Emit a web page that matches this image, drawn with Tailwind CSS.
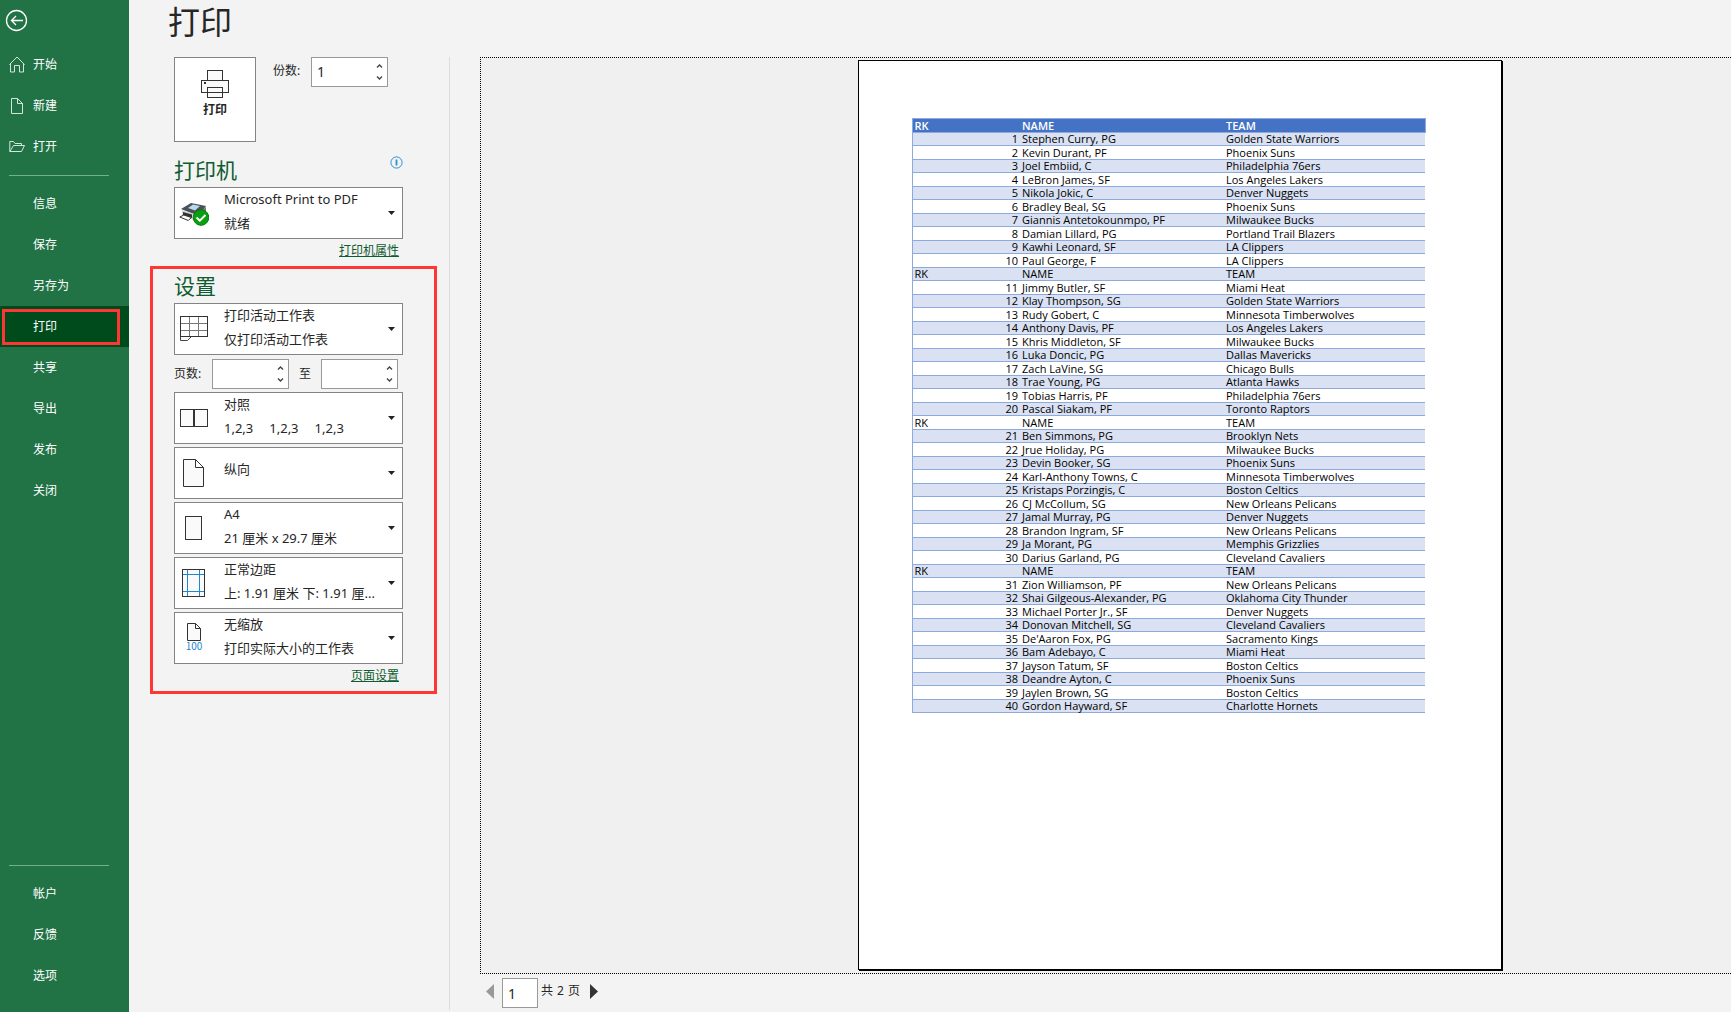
<!DOCTYPE html>
<html lang="zh-CN">
<head>
<meta charset="utf-8">
<title>打印</title>
<script src="https://cdn.jsdelivr.net/npm/@tailwindcss/browser@4"></script>
</head>
<body class="bg-[#f3f3f3] text-[#262626] font-['Noto_Sans','Noto_Sans_CJK_SC',sans-serif]">
<div class="flex min-h-screen overflow-hidden">

  <nav class="flex w-[129px] shrink-0 flex-col bg-[#217346] pb-4 text-xs text-white" aria-label="文件">
    <button type="button" aria-label="返回" class="flex h-11 items-start pt-[9px] pl-[5px]">
      <svg width="23" height="23" viewBox="0 0 23 23" fill="none" stroke="#fff" stroke-width="1.3"><circle cx="11.5" cy="11.5" r="10"/><path d="M18 11.5H6.5M11 7l-4.5 4.5L11 16"/></svg>
    </button>
    <a href="#" class="flex h-[41px] items-center gap-2 pl-[9px]">
      <svg width="16" height="18" viewBox="0 0 16 18" fill="none" stroke="#d4e6dc" stroke-width="1"><path d="M.4 8.600 8 1l7.600 7.600M1.500 7.500v8.500h4v-6.500h5V16h4V7.500"/></svg>
      <span>开始</span></a>
    <a href="#" class="flex h-[41px] items-center gap-2 pl-[9px]">
      <svg width="16" height="18" viewBox="0 0 16 18" fill="none" stroke="#d4e6dc" stroke-width="1"><path d="M2.500 1.500h6l5 5v10h-11zM8.500 1.500v5h5"/></svg>
      <span>新建</span></a>
    <a href="#" class="flex h-[41px] items-center gap-2 pl-[9px]">
      <svg width="16" height="18" viewBox="0 0 16 18" fill="none" stroke="#d4e6dc" stroke-width="1"><path d="M.8 13.500v-10h3.700l1.500 2h6.500v2M.8 13.500h11.700l3-6H4.500z"/></svg>
      <span>打开</span></a>
    <hr class="mt-2 mb-[7px] ml-[9px] w-[100px] border-[#6fb18c]">
    <a href="#" class="flex h-[41px] items-center pl-[33px]">信息</a>
    <a href="#" class="flex h-[41px] items-center pl-[33px]">保存</a>
    <a href="#" class="flex h-[41px] items-center pl-[33px]">另存为</a>
    <a href="#" aria-current="page" class="relative flex h-[41px] items-center bg-[#004b1c] pl-[33px]">打印
      <span class="absolute top-[3px] left-[2px] h-9 w-[118px] border-3 border-[#ff3636]"></span></a>
    <a href="#" class="flex h-[41px] items-center pl-[33px]">共享</a>
    <a href="#" class="flex h-[41px] items-center pl-[33px]">导出</a>
    <a href="#" class="flex h-[41px] items-center pl-[33px]">发布</a>
    <a href="#" class="flex h-[41px] items-center pl-[33px]">关闭</a>
    <hr class="mt-auto mb-[7px] ml-[9px] w-[100px] border-[#6fb18c]">
    <a href="#" class="flex h-[41px] items-center pl-[33px]">帐户</a>
    <a href="#" class="flex h-[41px] items-center pl-[33px]">反馈</a>
    <a href="#" class="flex h-[41px] items-center pl-[33px]">选项</a>
  </nav>

  <main class="flex min-w-0 flex-1 flex-col">
    <h1 class="h-[57px] pl-[39px] text-[32px] leading-10 font-['Noto_Sans_CJK_SC',sans-serif] font-normal">打印</h1>
    <div class="flex flex-1">

      <div class="mb-[2px] w-[321px] shrink-0 border-r border-[#dcdcdc] pl-[21px]">
        <div class="flex items-start pl-6">
          <button type="button" class="flex h-[85px] w-[82px] flex-col items-center border border-[#848484] bg-white pt-3 text-xs font-bold">
            <svg width="28" height="28" viewBox="0 0 28 28" fill="#fafafa" stroke="#333" stroke-width="1" shape-rendering="crispEdges"><path d="M6.500.5h15v10h-15zM.5 10.500h27v12H.5zM6.500 17.500h15v10h-15z"/><path d="M3 12h2v2H3z" fill="#333" stroke="none"/></svg>
            <span class="mt-1 leading-4">打印</span>
          </button>
          <label for="copies" class="ml-[17px] pt-1 text-xs leading-5">份数:</label>
          <div class="ml-auto mr-[61px] flex h-[30px] w-[77px] border border-[#999] bg-white">
            <input id="copies" type="text" inputmode="numeric" value="1" class="w-14 min-w-0 pl-[5px] text-sm outline-none">
            <div class="flex flex-1 flex-col justify-between py-1.5 pl-2"><svg width="7" height="4" viewBox="0 0 7 4" fill="none" stroke="#444" stroke-width="1.400"><path d="M1 3.500 3.500 1 6 3.500"/></svg><svg width="7" height="4" viewBox="0 0 7 4" fill="none" stroke="#444" stroke-width="1.400"><path d="M1 .5 3.500 3 6 .5"/></svg></div>
          </div>
        </div>

        <section class="pr-[46px] pl-6">
          <div class="mt-3 flex h-[33px] justify-between">
            <h2 class="text-[21px] leading-[30px] text-[#0e5c2f] font-['Noto_Sans_CJK_SC',sans-serif] font-normal">打印机</h2>
            <button type="button" aria-label="打印机状态" class="h-4"><svg width="13" height="13" viewBox="0 0 13 13" fill="none" stroke="#2b8fd0"><circle cx="6.500" cy="6.500" r="5.600"/><path d="M6.500 3.500v6" stroke-width="1.800"/></svg></button>
          </div>
          <button type="button" aria-haspopup="listbox" class="flex h-[52px] w-full items-center border border-[#848484] bg-white pr-[7px] text-left">
            <svg class="ml-1 shrink-0" width="30" height="30" viewBox="0 0 30 30"><path d="M2 11 12 5l15 3-3 4-7 5z" fill="#4c5157"/><path d="m9 10 5-3.500 7 1.500-5 4.500z" fill="#b9d9ee"/><path d="m3 12 14 4.500V23L3 18z" fill="#d5d7d9"/><path d="m17 16.500 10-7.500v6l-10 8z" fill="#777c82"/><path d="m4 14 9 2.500V20l-9-2.500z" fill="#333"/><path d="m.8 19 4-2 7.500 2.500-3 3z" fill="#fff" stroke="#333"/><circle cx="22" cy="19.500" r="7.800" fill="#08a010" stroke="#087a0e"/><path d="m17.500 19.500 3.300 3.200 5.700-5.700" fill="none" stroke="#fff" stroke-width="2"/></svg>
            <span class="ml-[15px] min-w-0 flex-1 pb-1 text-[13px] leading-6"><span class="block">Microsoft Print to PDF</span><span class="block">就绪</span></span>
            <svg width="7" height="4" viewBox="0 0 7 4"><path d="M0 0h7L3.500 4z" fill="#222"/></svg>
          </button>
          <div class="flex h-[27px] justify-end pr-1 text-xs leading-6"><a href="#" class="text-[#0e5c2f] underline">打印机属性</a></div>
        </section>

        <section class="mr-3 flex flex-col gap-[3px] border-3 border-[#ff3636] pr-[31px] pb-[6px] pl-[21px]">
          <h2 class="h-[31px] text-[21px] leading-8 text-[#0e5c2f] font-['Noto_Sans_CJK_SC',sans-serif] font-normal">设置</h2>
          <button type="button" aria-haspopup="listbox" class="flex h-[52px] w-full items-center border border-[#848484] bg-white pr-[7px] text-left">
            <svg class="ml-[5px] shrink-0" width="28" height="26" viewBox="0 0 28 26" fill="#fafafa" stroke="#777"><path d="M.5 20.500v4h7l4-4" stroke="#444"/><path d="M9.500.5v20M18.500.5v20M.5 7.500h27M.5 14.500h27" shape-rendering="crispEdges"/><path d="M.5.5h27v20H.5z" fill="none" stroke="#333" shape-rendering="crispEdges"/></svg>
            <span class="ml-4 min-w-0 flex-1 pb-1 text-[13px] leading-6"><span class="block">打印活动工作表</span><span class="block">仅打印活动工作表</span></span>
            <svg width="7" height="4" viewBox="0 0 7 4"><path d="M0 0h7L3.500 4z" fill="#222"/></svg>
          </button>
          <div class="flex h-[31px] items-center pt-px text-xs">
            <label for="from" class="w-[38px]">页数:</label>
            <div class="flex h-[30px] w-[77px] border border-[#999] bg-white">
              <input id="from" type="text" inputmode="numeric" class="w-14 min-w-0 pl-[5px] text-sm outline-none">
              <div class="flex flex-1 flex-col justify-between py-1.5 pl-2"><svg width="7" height="4" viewBox="0 0 7 4" fill="none" stroke="#444" stroke-width="1.400"><path d="M1 3.500 3.500 1 6 3.500"/></svg><svg width="7" height="4" viewBox="0 0 7 4" fill="none" stroke="#444" stroke-width="1.400"><path d="M1 .5 3.500 3 6 .5"/></svg></div>
            </div>
            <label for="to" class="w-8 text-center">至</label>
            <div class="flex h-[30px] w-[77px] border border-[#999] bg-white">
              <input id="to" type="text" inputmode="numeric" class="w-14 min-w-0 pl-[5px] text-sm outline-none">
              <div class="flex flex-1 flex-col justify-between py-1.5 pl-2"><svg width="7" height="4" viewBox="0 0 7 4" fill="none" stroke="#444" stroke-width="1.400"><path d="M1 3.500 3.500 1 6 3.500"/></svg><svg width="7" height="4" viewBox="0 0 7 4" fill="none" stroke="#444" stroke-width="1.400"><path d="M1 .5 3.500 3 6 .5"/></svg></div>
            </div>
          </div>
          <button type="button" aria-haspopup="listbox" class="flex h-[52px] w-full items-center border border-[#848484] bg-white pr-[7px] text-left">
            <svg class="ml-[5px] shrink-0" width="28" height="18" viewBox="0 0 28 18" fill="#fafafa" stroke="#333" shape-rendering="crispEdges"><path d="M.5.500h13v17H.5zM14.500.5h13v17h-13z"/></svg>
            <span class="ml-4 min-w-0 flex-1 pb-1 text-[13px] leading-6"><span class="block">对照</span><span class="flex gap-4"><span>1,2,3</span><span>1,2,3</span><span>1,2,3</span></span></span>
            <svg width="7" height="4" viewBox="0 0 7 4"><path d="M0 0h7L3.500 4z" fill="#222"/></svg>
          </button>
          <button type="button" aria-haspopup="listbox" class="flex h-[52px] w-full items-center border border-[#848484] bg-white pr-[7px] text-left">
            <svg class="ml-[5px] shrink-0" width="28" height="28" viewBox="0 0 28 28" fill="#fafafa" stroke="#333"><path d="M3.500.5h12l8 8v19h-20zM15.500.5v8h8"/></svg>
            <span class="ml-4 min-w-0 flex-1 pb-2 text-[13px] leading-6">纵向</span>
            <svg width="7" height="4" viewBox="0 0 7 4"><path d="M0 0h7L3.500 4z" fill="#222"/></svg>
          </button>
          <button type="button" aria-haspopup="listbox" class="flex h-[52px] w-full items-center border border-[#848484] bg-white pr-[7px] text-left">
            <svg class="ml-[5px] shrink-0" width="28" height="24" viewBox="0 0 28 24" fill="#fafafa" stroke="#333" shape-rendering="crispEdges"><path d="M5.500.5h16v23h-16z"/></svg>
            <span class="ml-4 min-w-0 flex-1 pb-1 text-[13px] leading-6"><span class="block">A4</span><span class="block">21 厘米 x 29.7 厘米</span></span>
            <svg width="7" height="4" viewBox="0 0 7 4"><path d="M0 0h7L3.500 4z" fill="#222"/></svg>
          </button>
          <button type="button" aria-haspopup="listbox" class="flex h-[52px] w-full items-center border border-[#848484] bg-white pr-[7px] text-left">
            <svg class="ml-[5px] shrink-0" width="28" height="28" viewBox="0 0 28 28" fill="#fafafa" shape-rendering="crispEdges"><path d="M2.500.5h22v27h-22z" stroke="#333"/><path d="M7.500 1v26M19.500 1v26M3 5.500h21M3 22.500h21" stroke="#1e88cf"/></svg>
            <span class="ml-4 min-w-0 flex-1 pb-1 text-[13px] leading-6"><span class="block">正常边距</span><span class="block whitespace-nowrap">上: 1.91 厘米 下: 1.91 厘...</span></span>
            <svg class="shrink-0" width="7" height="4" viewBox="0 0 7 4"><path d="M0 0h7L3.500 4z" fill="#222"/></svg>
          </button>
          <button type="button" aria-haspopup="listbox" class="flex h-[52px] w-full items-center border border-[#848484] bg-white pr-[7px] text-left">
            <span class="ml-[5px] flex w-7 flex-col items-center pb-[2px] text-[10px] leading-[10px] text-[#1e88cf] font-['Noto_Sans_CJK_SC',sans-serif]"><svg width="14" height="18" viewBox="0 0 14 18" fill="#fafafa" stroke="#333"><path d="M.5.5h8l5 5v12H.5zM8.500.5v5h5"/></svg>100</span>
            <span class="ml-4 min-w-0 flex-1 pb-1 text-[13px] leading-6"><span class="block">无缩放</span><span class="block">打印实际大小的工作表</span></span>
            <svg width="7" height="4" viewBox="0 0 7 4"><path d="M0 0h7L3.500 4z" fill="#222"/></svg>
          </button>
          <div class="flex justify-end pr-1 text-xs leading-[18px]"><a href="#" class="text-[#0e5c2f] underline">页面设置</a></div>
        </section>
      </div>

      <div class="ml-[30px] flex min-w-0 flex-1 flex-col">
        <div class="-mr-[148px] flex flex-1 justify-center border border-dotted border-black bg-[#f0f0f0] pt-[2px] pb-[3px]">
          <article class="w-[644px] min-h-[910px] border border-black bg-white px-[53px] pt-[57px] shadow-[1px_1px_0_#000]">
            <table class="w-[514px] table-fixed border-collapse font-['Open_Sans',sans-serif] text-[11px] leading-[12px] text-black">
              <colgroup><col class="w-[108px]"><col class="w-[204px]"><col></colgroup>
              <thead><tr class="h-[14px] border border-[#8ea9db] bg-[#4472c4] text-left text-white"><th class="p-0 pl-[2px] font-semibold">RK</th><th class="p-0 pl-[2px] font-semibold">NAME</th><th class="p-0 pl-[2px] font-semibold">TEAM</th></tr></thead>
              <tbody id="rows"></tbody>
            </table>
          </article>
        </div>
        <div class="flex h-[38px] items-center pb-1 pl-[6px] text-sm">
          <button type="button" aria-label="上一页"><svg width="8" height="15" viewBox="0 0 8 15"><path d="M8 0v15L0 7.500z" fill="#999"/></svg></button>
          <input type="text" aria-label="页码" value="1" class="mt-1 ml-2 h-[30px] w-9 border border-[#999] bg-white pl-[5px] text-sm outline-none">
          <span class="ml-[3px] flex gap-1 text-xs"><span>共</span><span>2</span><span>页</span></span>
          <button type="button" aria-label="下一页" class="ml-[10px]"><svg width="8" height="15" viewBox="0 0 8 15"><path d="M0 0v15l8-7.500z" fill="#333"/></svg></button>
        </div>
      </div>
    </div>
  </main>
</div>
<script>
const players = `Stephen Curry, PG|Golden State Warriors
Kevin Durant, PF|Phoenix Suns
Joel Embiid, C|Philadelphia 76ers
LeBron James, SF|Los Angeles Lakers
Nikola Jokic, C|Denver Nuggets
Bradley Beal, SG|Phoenix Suns
Giannis Antetokounmpo, PF|Milwaukee Bucks
Damian Lillard, PG|Portland Trail Blazers
Kawhi Leonard, SF|LA Clippers
Paul George, F|LA Clippers
Jimmy Butler, SF|Miami Heat
Klay Thompson, SG|Golden State Warriors
Rudy Gobert, C|Minnesota Timberwolves
Anthony Davis, PF|Los Angeles Lakers
Khris Middleton, SF|Milwaukee Bucks
Luka Doncic, PG|Dallas Mavericks
Zach LaVine, SG|Chicago Bulls
Trae Young, PG|Atlanta Hawks
Tobias Harris, PF|Philadelphia 76ers
Pascal Siakam, PF|Toronto Raptors
Ben Simmons, PG|Brooklyn Nets
Jrue Holiday, PG|Milwaukee Bucks
Devin Booker, SG|Phoenix Suns
Karl-Anthony Towns, C|Minnesota Timberwolves
Kristaps Porzingis, C|Boston Celtics
CJ McCollum, SG|New Orleans Pelicans
Jamal Murray, PG|Denver Nuggets
Brandon Ingram, SF|New Orleans Pelicans
Ja Morant, PG|Memphis Grizzlies
Darius Garland, PG|Cleveland Cavaliers
Zion Williamson, PF|New Orleans Pelicans
Shai Gilgeous-Alexander, PG|Oklahoma City Thunder
Michael Porter Jr., SF|Denver Nuggets
Donovan Mitchell, SG|Cleveland Cavaliers
De'Aaron Fox, PG|Sacramento Kings
Bam Adebayo, C|Miami Heat
Jayson Tatum, SF|Boston Celtics
Deandre Ayton, C|Phoenix Suns
Jaylen Brown, SG|Boston Celtics
Gordon Hayward, SF|Charlotte Hornets`.split('\n').map(l => l.split('|'));
const rows = [];
players.forEach(([name, team], i) => {
  if (i && i % 10 === 0) rows.push(['RK', 'NAME', 'TEAM']);
  rows.push([i + 1, name, team]);
});
document.getElementById('rows').innerHTML = rows.map(([rk, name, team], i) =>
  `<tr class="h-[13px] border-y border-l border-[#8ea9db] odd:bg-[#d9e1f2] even:h-[14px]"><td class="p-0 ${rk === 'RK' ? 'pl-[2px]' : 'pr-[2px] text-right'}">${rk}</td><td class="p-0 pl-[2px]">${name}</td><td class="p-0 pl-[2px]">${team}</td></tr>`).join('');
</script>
</body>
</html>
